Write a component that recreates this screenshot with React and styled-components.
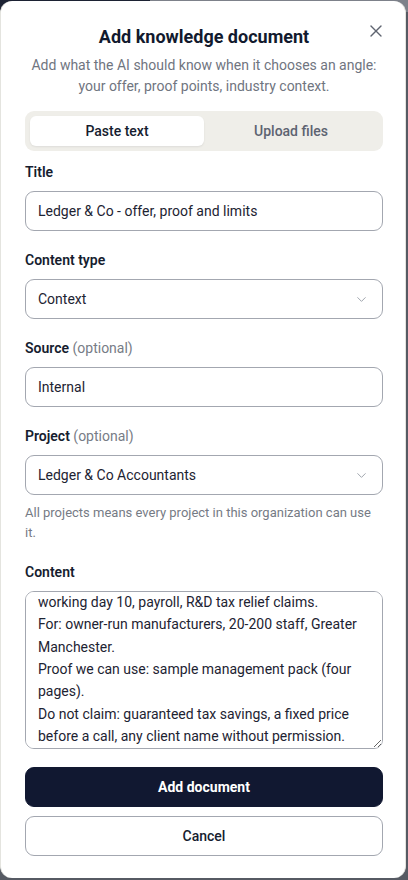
import React, { useEffect, useRef } from 'react';
import styled, { createGlobalStyle } from 'styled-components';
import { X, ChevronDown } from 'lucide-react';

const GlobalStyle = createGlobalStyle`
  html, body {
    margin: 0;
    padding: 0;
  }
  body {
    font-family: Roboto, "Noto Sans", sans-serif;
    background: #5d616a;
    -webkit-font-smoothing: antialiased;
  }
  * { box-sizing: border-box; }
`;

const Backdrop = styled.div`
  min-height: 880px;
  padding: 1px 2px 2px 0;
  background: linear-gradient(90deg, #1c2233 0 150px, #7d818a 150px) top / 100% 12px no-repeat, #565a63;
`;

const Sheet = styled.div`
  position: relative;
  height: 877px;
  background: #fff;
  border-left: 1px solid #e4e4df;
  border-right: 1px solid #e4e4df;
  border-radius: 12px;
  padding: 22px 22px 25px 24px;
  display: flex;
  flex-direction: column;
`;

const CloseButton = styled.button`
  position: absolute;
  top: 19px;
  right: 18px;
  width: 22px;
  height: 22px;
  padding: 0;
  border: 0;
  background: none;
  color: #5f6470;
  display: flex;
  align-items: center;
  justify-content: center;
  cursor: pointer;
`;

const Heading = styled.h2`
  margin: 0;
  font-size: 18px;
  line-height: 28px;
  font-weight: 700;
  color: #121a2e;
  text-align: center;
`;

const Lead = styled.p`
  margin: 4px 0 0;
  font-size: 14px;
  line-height: 21px;
  color: #70757f;
  text-align: center;
`;

const Tabs = styled.div`
  margin-top: 14px;
  display: grid;
  grid-template-columns: 1fr 1fr;
  padding: 5px;
  background: #efeee9;
  border-radius: 9px;
`;

const Tab = styled.button`
  height: 30px;
  border: 0;
  border-radius: 6px;
  font-family: inherit;
  font-size: 14px;
  font-weight: 500;
  background: ${p => (p.$active ? '#fff' : 'transparent')};
  color: ${p => (p.$active ? '#161d2f' : '#5d6371')};
  box-shadow: ${p => (p.$active ? '0 1px 2px rgba(20, 24, 40, 0.08)' : 'none')};
  cursor: pointer;
`;

const Form = styled.div`
  margin-top: 11px;
  display: flex;
  flex-direction: column;
  gap: 19px;
`;

const Field = styled.div`
  display: flex;
  flex-direction: column;
`;

const Label = styled.label`
  font-size: 14px;
  line-height: 20px;
  font-weight: 600;
  color: #161d2f;
  margin-bottom: 9px;
`;

const Optional = styled.span`
  font-weight: 400;
  color: #777c86;
`;

const TextInput = styled.input`
  height: 40px;
  width: 100%;
  padding: 0 12px;
  border: 1px solid #a3a7b0;
  border-radius: 9px;
  font-family: inherit;
  font-size: 14px;
  color: #1d2332;
  background: #fff;
  outline: none;
`;

const SelectBox = styled.div`
  height: 40px;
  padding: 0 12px;
  border: 1px solid #a3a7b0;
  border-radius: 9px;
  font-size: 14px;
  color: #1d2332;
  display: flex;
  align-items: center;
  justify-content: space-between;
  svg {
    color: #9a9fa8;
    margin-right: 1px;
  }
`;

const Help = styled.p`
  margin: 8px 0 0;
  font-size: 13px;
  line-height: 20px;
  color: #767b85;
`;

const TextArea = styled.textarea`
  height: 158px;
  width: 100%;
  padding: 8px 12px;
  border: 1px solid #a3a7b0;
  border-radius: 9px;
  font-family: inherit;
  font-size: 14px;
  line-height: 22.4px;
  color: #1d2332;
  resize: vertical;
  outline: none;
  scrollbar-width: none;
`;

const Actions = styled.div`
  margin-top: 18px;
  display: flex;
  flex-direction: column;
  gap: 9px;
`;

const Button = styled.button`
  height: 40px;
  width: 100%;
  border-radius: 9px;
  font-family: inherit;
  font-size: 14px;
  font-weight: ${p => (p.$primary ? 700 : 500)};
  border: 1px solid ${p => (p.$primary ? '#111831' : '#a3a7b0')};
  background: ${p => (p.$primary ? '#111831' : '#fff')};
  color: ${p => (p.$primary ? '#fff' : '#161d2f')};
  cursor: pointer;
`;

const content = `Offer: monthly management accounts for owner-run firms, delivered by
working day 10, payroll, R&D tax relief claims.
For: owner-run manufacturers, 20-200 staff, Greater Manchester.
Proof we can use: sample management pack (four pages).
Do not claim: guaranteed tax savings, a fixed price before a call, any client name without permission.`;

export default function App() {
  const areaRef = useRef(null);

  useEffect(() => {
    const el = areaRef.current;
    if (el) el.scrollTop = el.scrollHeight - el.clientHeight - 8;
  }, []);

  return (
    <>
      <GlobalStyle />
      <Backdrop>
        <Sheet>
          <CloseButton aria-label="Close">
            <X size={20} strokeWidth={1.6} />
          </CloseButton>
          <Heading>Add knowledge document</Heading>
          <Lead>
            Add what the AI should know when it chooses an angle: your offer, proof points, industry context.
          </Lead>

          <Tabs>
            <Tab $active>Paste text</Tab>
            <Tab>Upload files</Tab>
          </Tabs>

          <Form>
            <Field>
              <Label>Title</Label>
              <TextInput defaultValue="Ledger & Co - offer, proof and limits" />
            </Field>
            <Field>
              <Label>Content type</Label>
              <SelectBox>
                Context
                <ChevronDown size={15} strokeWidth={1.5} />
              </SelectBox>
            </Field>
            <Field>
              <Label>
                Source <Optional>(optional)</Optional>
              </Label>
              <TextInput defaultValue="Internal" />
            </Field>
            <Field>
              <Label>
                Project <Optional>(optional)</Optional>
              </Label>
              <SelectBox>
                Ledger & Co Accountants
                <ChevronDown size={15} strokeWidth={1.5} />
              </SelectBox>
              <Help>All projects means every project in this organization can use it.</Help>
            </Field>
            <Field>
              <Label>Content</Label>
              <TextArea ref={areaRef} defaultValue={content} />
            </Field>
          </Form>

          <Actions>
            <Button $primary>Add document</Button>
            <Button>Cancel</Button>
          </Actions>
        </Sheet>
      </Backdrop>
    </>
  );
}
